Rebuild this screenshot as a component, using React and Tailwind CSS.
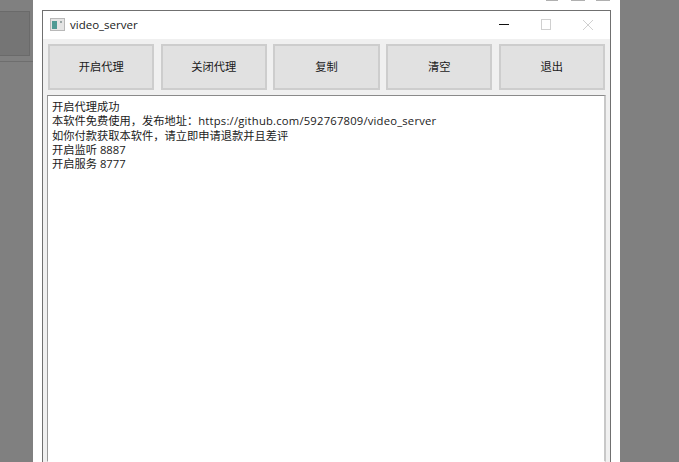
const BUTTONS = ['开启代理', '关闭代理', '复制', '清空', '退出']

const font = "font-['Open_Sans','Noto_Sans_CJK_SC',sans-serif]"

export default function App() {
  return (
    <div className={`flex h-[462px] w-[679px] overflow-hidden bg-white ${font}`}>

      {/* Dimmed page behind, left side */}
      <div className="w-[33px] shrink-0 bg-[#808080]">
        <div className="mr-[3px] mt-[11px] h-[45px] border-y border-r border-[#6a6a6a] bg-[#757575]" />
        <div className="mt-[5px] h-px bg-[#6e6e6e]" />
      </div>

      {/* White page holding the window */}
      <div className="flex w-[587px] shrink-0 flex-col pl-[9px] pr-[9px]">
        <div className="flex h-[10px] shrink-0 justify-end pr-px">
          <div className="h-[1px] w-[12px] bg-[#b0b0b0]" />
          <div className="ml-[13px] h-[1px] w-[14px] bg-[#b0b0b0]" />
          <div className="ml-[11px] h-[1px] w-[14px] bg-[#b0b0b0]" />
        </div>

        <div className="flex min-h-0 flex-1 flex-col border-x border-t border-[#707070] bg-[#f0f0f0]">
          {/* Title bar */}
          <div className="flex h-[28px] shrink-0 items-center bg-white pl-[7px]">
            <svg width="16" height="14" viewBox="0 0 16 14">
              <rect x="0.5" y="0.5" width="14" height="12" fill="#e4e4e4" stroke="#b8b8b8" />
              <rect x="2" y="3" width="5" height="8" fill="#4f9a94" />
              <rect x="10" y="3" width="2" height="2" fill="#9aa5a5" />
            </svg>
            <span className="ml-[4px] text-[11.5px] leading-none text-[#1a1a1a]">video_server</span>

            <div className="ml-auto flex items-center">
              <svg width="42" height="28" viewBox="0 0 42 28">
                <path d="M16 13.5h10" stroke="#111" strokeWidth="1" />
              </svg>
              <svg width="42" height="28" viewBox="0 0 42 28">
                <rect x="16.5" y="8.5" width="9" height="10" fill="none" stroke="#d0d0d0" />
              </svg>
              <svg className="mr-px" width="42" height="28" viewBox="0 0 42 28">
                <path d="M16 9l10 10M26 9L16 19" stroke="#d0d0d0" strokeWidth="1" fill="none" />
              </svg>
            </div>
          </div>

          {/* Buttons */}
          <div className="mt-[5px] flex shrink-0 gap-[6.25px] pl-[5px] pr-[5px]">
            {BUTTONS.map((label) => (
              <button
                key={label}
                className="flex h-[46px] flex-1 items-center justify-center border-2 border-[#cdcdcd] bg-[#e1e1e1] pt-px text-[11.25px] text-[#1a1a1a]"
              >
                {label}
              </button>
            ))}
          </div>

          {/* Log output */}
          <div className="mx-[4px] mt-[5px] min-h-0 flex-1 border-y border-l border-r-2 border-t-[#8a8a8a] border-l-[#9a9a9a] border-r-[#c8c8c8] border-b-transparent bg-white px-[4px] pt-[4px] text-[11.25px] leading-[14.3px] text-[#1a1a1a]">
            <div>开启代理成功</div>
            <div>
              本软件免费使用，发布地址：
              <span className="tracking-[0.2px]">https://github.com/592767809/video_server</span>
            </div>
            <div>如你付款获取本软件，请立即申请退款并且差评</div>
            <div>开启监听 8887</div>
            <div>开启服务 8777</div>
          </div>
        </div>
      </div>

      {/* Dimmed page behind, right side */}
      <div className="flex-1 bg-[#808080]" />
    </div>
  )
}
